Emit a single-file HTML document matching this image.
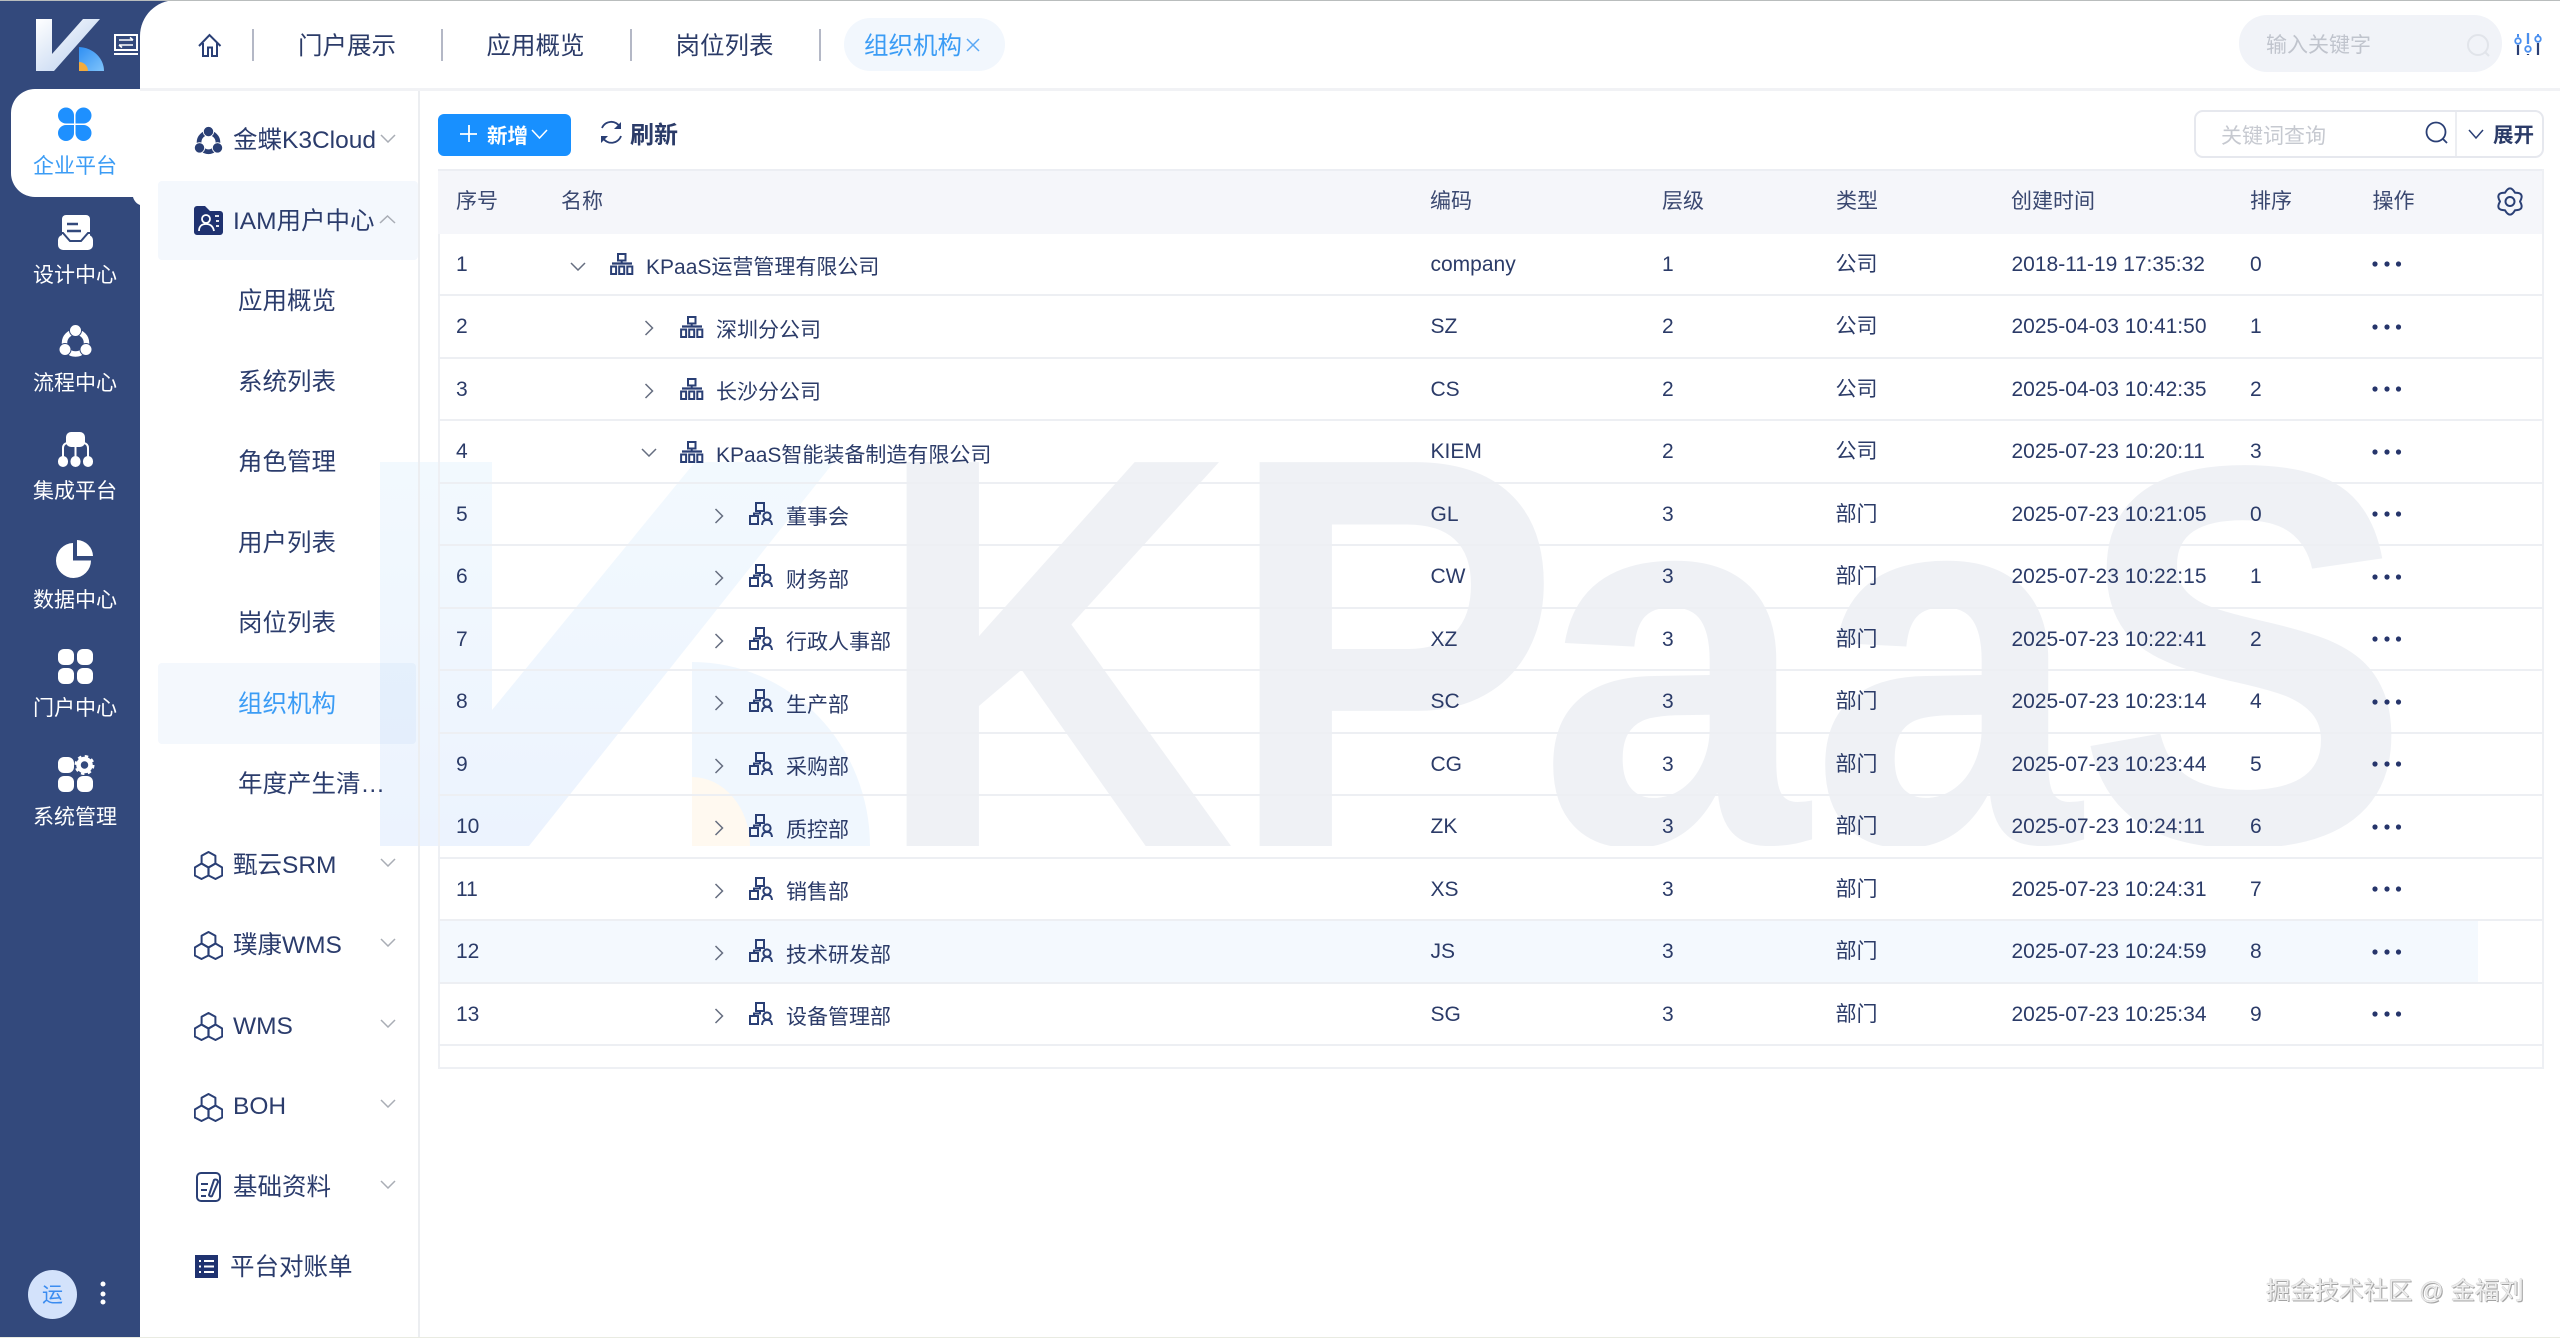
<!DOCTYPE html>
<html lang="zh"><head><meta charset="utf-8"><title>组织机构</title>
<style>
*{box-sizing:border-box;margin:0;padding:0}
html,body{width:2560px;height:1338px;overflow:hidden;background:#fff}
body{position:relative;font-family:"Liberation Sans","Noto Sans CJK SC",sans-serif;color:#2b3b68}
.a{position:absolute}
.t{position:absolute;white-space:nowrap;line-height:40px;height:40px;margin-top:1.5px}
.s{left:0;width:150px;text-align:center;font-size:21px;color:#fff}
.m{font-size:24.5px;color:#2b3c6c}
.h{font-size:24.5px;color:#2b3b68}
.th{font-size:21px;color:#3a4870;top:180px}
.r{position:absolute;left:438px;width:2105px;height:62.5px;border-bottom:2px solid #edeff3;font-size:21px;line-height:61px;color:#2b3b68}
.r span{position:absolute;top:0;white-space:nowrap}
.r .n{top:3.5px}
.c1{left:18px}.c3{left:992.5px}.c4{left:1224px}.c5{left:1397.5px}.c6{left:1573.5px}.c7{left:1812px}
.l0{left:208px}.l1{left:278px}.l2{left:348px}
</style></head><body>

<div class="a" style="left:0;top:0;width:140px;height:1338px;background:#33497c"></div>
<div class="a" style="left:100px;top:0;width:80px;height:60px;background:#33497c"></div>
<div class="a" style="left:140px;top:0;width:60px;height:60px;background:#fff;border-top-left-radius:36px"></div>
<div class="a" style="left:11px;top:89px;width:129px;height:108px;background:#fff;border-radius:24px 0 0 24px"></div>
<svg class="a" style="left:133px;top:197px" width="7" height="8"><path d="M0 0H7V8C4 7 1 4 0 0Z" fill="#fff"/></svg>

<div class="a" style="left:158px;top:181px;width:260px;height:79px;background:#f4f8fd;border-radius:4px"></div>
<div class="a" style="left:158px;top:663px;width:258px;height:81px;background:#f4f8fd;border-radius:4px"></div>

<div class="a" style="left:438px;top:169px;width:2105px;height:65px;background:#f5f6fa;border-top:2px solid #eceef3"></div>
<div class="a" style="left:438px;top:921px;width:2040px;height:62.5px;background:#f4f9fe"></div>

<!-- watermark -->
<svg class="a" style="left:0;top:0" width="2560" height="1338" viewBox="0 0 2560 1338">
<defs><linearGradient id="wm" x1="0" y1="0" x2="0" y2="1"><stop offset="0" stop-color="#2e9cf0" stop-opacity=".06"/><stop offset="1" stop-color="#2a78ee" stop-opacity=".09"/></linearGradient>
<clipPath id="wc"><rect x="370" y="455" width="2050" height="391"/></clipPath></defs>
<path d="M380 462H492V710L695 462H834L529 846H380Z" fill="url(#wm)"/>
<path d="M692 662A178 184 0 0 1 870 846H692Z" fill="#3c96f5" fill-opacity=".08"/>
<path d="M692 777A58 69 0 0 1 750 846H692Z" fill="#fff9f0"/>
<g font-family="Liberation Sans" font-weight="700" font-size="558" fill="#1e3a6e" fill-opacity=".07" clip-path="url(#wc)">
<text transform="translate(873 846) scale(.9 1)">K</text>
<text transform="translate(1226 846) scale(.9 1)">P</text>
<text transform="translate(1539 843) scale(.87 .94)">a</text>
<text transform="translate(1811 843) scale(.87 .94)">a</text>
<text transform="translate(2076 843) scale(.9 .97)">S</text>
</g></svg>

<!-- structure lines -->
<div class="a" style="left:140px;top:88px;width:2420px;height:3px;background:#f1f2f5"></div>
<div class="a" style="left:418px;top:91px;width:2px;height:1247px;background:#eceef1"></div>
<div class="a" style="left:438px;top:234px;width:2px;height:834px;background:#eef0f4"></div>
<div class="a" style="left:2542px;top:169px;width:2px;height:899px;background:#eef0f4"></div>
<div class="a" style="left:438px;top:1067px;width:2106px;height:2px;background:#eef0f4"></div>
<div class="a" style="left:0;top:0;width:2560px;height:1px;background:#b9bdbd"></div>
<div class="a" style="left:0;top:1337px;width:2560px;height:1px;background:#e9ebe2"></div>

<!-- top tabs -->
<div class="a" style="left:844px;top:18px;width:161px;height:53px;background:#f2f7fd;border-radius:27px"></div>
<div class="a" style="left:252px;top:29px;width:2px;height:32px;background:#b4b8c6"></div>
<div class="a" style="left:441px;top:29px;width:2px;height:32px;background:#b4b8c6"></div>
<div class="a" style="left:630px;top:29px;width:2px;height:32px;background:#b4b8c6"></div>
<div class="a" style="left:819px;top:29px;width:2px;height:32px;background:#b4b8c6"></div>
<div class="t h" style="left:298px;top:25px">门户展示</div>
<div class="t h" style="left:486.5px;top:25px">应用概览</div>
<div class="t h" style="left:675.5px;top:25px">岗位列表</div>
<div class="t h" style="left:864px;top:25px;color:#3b9cf5">组织机构</div>

<!-- top search -->
<div class="a" style="left:2239px;top:15px;width:263px;height:57px;background:#f1f3f8;border-radius:28px"></div>
<div class="t" style="left:2266px;top:24px;font-size:21px;color:#c0c4cd">输入关键字</div>

<!-- sidebar text -->
<div class="t s" style="top:145px;color:#3b9cf5">企业平台</div>
<div class="t s" style="top:254px">设计中心</div>
<div class="t s" style="top:362px">流程中心</div>
<div class="t s" style="top:470px">集成平台</div>
<div class="t s" style="top:579px">数据中心</div>
<div class="t s" style="top:687px">门户中心</div>
<div class="t s" style="top:796px">系统管理</div>
<div class="a" style="left:28px;top:1270px;width:49px;height:49px;border-radius:50%;background:#d3e2fb;color:#3b8cf0;font-size:21px;line-height:51px;text-align:center">运</div>

<!-- menu text -->
<div class="t m" style="left:233px;top:119px">金蝶K3Cloud</div>
<div class="t m" style="left:233px;top:200.5px">IAM用户中心</div>
<div class="t m" style="left:238px;top:280px">应用概览</div>
<div class="t m" style="left:238px;top:361px">系统列表</div>
<div class="t m" style="left:238px;top:441.5px">角色管理</div>
<div class="t m" style="left:238px;top:522px">用户列表</div>
<div class="t m" style="left:238px;top:602px">岗位列表</div>
<div class="t m" style="left:238px;top:683px;color:#3b9cf5">组织机构</div>
<div class="t m" style="left:238px;top:763px">年度产生清…</div>
<div class="t m" style="left:233px;top:844px">甄云SRM</div>
<div class="t m" style="left:233px;top:924px">璞康WMS</div>
<div class="t m" style="left:233px;top:1005px">WMS</div>
<div class="t m" style="left:233px;top:1085px">BOH</div>
<div class="t m" style="left:233px;top:1166px">基础资料</div>
<div class="t m" style="left:230px;top:1246px">平台对账单</div>

<!-- toolbar -->
<div class="a" style="left:438px;top:114px;width:133px;height:42px;background:#1890ff;border-radius:6px"></div>
<div class="t" style="left:487px;top:115px;font-size:20.5px;font-weight:700;color:#fff">新增</div>
<div class="t" style="left:630px;top:114px;font-size:24px;font-weight:700;color:#2b3b68">刷新</div>
<div class="a" style="left:2194px;top:110px;width:350px;height:48px;border:2px solid #e6e8ee;border-radius:9px"></div>
<div class="a" style="left:2455px;top:112px;width:2px;height:44px;background:#eceef2"></div>
<div class="t" style="left:2221px;top:115px;font-size:21px;color:#c6c9d0">关键词查询</div>
<div class="t" style="left:2493px;top:114px;font-size:20.5px;font-weight:700;color:#2b3b68">展开</div>

<!-- table header -->
<div class="t th" style="left:456px">序号</div>
<div class="t th" style="left:561px">名称</div>
<div class="t th" style="left:1430px">编码</div>
<div class="t th" style="left:1662px">层级</div>
<div class="t th" style="left:1836px">类型</div>
<div class="t th" style="left:2011px">创建时间</div>
<div class="t th" style="left:2250px">排序</div>
<div class="t th" style="left:2372.5px">操作</div>

<!-- rows -->
<div class="r" style="top:233.5px"><span class="c1">1</span><span class="n l0">KPaaS运营管理有限公司</span><span class="c3">company</span><span class="c4">1</span><span class="c5">公司</span><span class="c6">2018-11-19 17:35:32</span><span class="c7">0</span></div>
<div class="r" style="top:296px"><span class="c1">2</span><span class="n l1">深圳分公司</span><span class="c3">SZ</span><span class="c4">2</span><span class="c5">公司</span><span class="c6">2025-04-03 10:41:50</span><span class="c7">1</span></div>
<div class="r" style="top:358.5px"><span class="c1">3</span><span class="n l1">长沙分公司</span><span class="c3">CS</span><span class="c4">2</span><span class="c5">公司</span><span class="c6">2025-04-03 10:42:35</span><span class="c7">2</span></div>
<div class="r" style="top:421px"><span class="c1">4</span><span class="n l1">KPaaS智能装备制造有限公司</span><span class="c3">KIEM</span><span class="c4">2</span><span class="c5">公司</span><span class="c6">2025-07-23 10:20:11</span><span class="c7">3</span></div>
<div class="r" style="top:483.5px"><span class="c1">5</span><span class="n l2">董事会</span><span class="c3">GL</span><span class="c4">3</span><span class="c5">部门</span><span class="c6">2025-07-23 10:21:05</span><span class="c7">0</span></div>
<div class="r" style="top:546px"><span class="c1">6</span><span class="n l2">财务部</span><span class="c3">CW</span><span class="c4">3</span><span class="c5">部门</span><span class="c6">2025-07-23 10:22:15</span><span class="c7">1</span></div>
<div class="r" style="top:608.5px"><span class="c1">7</span><span class="n l2">行政人事部</span><span class="c3">XZ</span><span class="c4">3</span><span class="c5">部门</span><span class="c6">2025-07-23 10:22:41</span><span class="c7">2</span></div>
<div class="r" style="top:671px"><span class="c1">8</span><span class="n l2">生产部</span><span class="c3">SC</span><span class="c4">3</span><span class="c5">部门</span><span class="c6">2025-07-23 10:23:14</span><span class="c7">4</span></div>
<div class="r" style="top:733.5px"><span class="c1">9</span><span class="n l2">采购部</span><span class="c3">CG</span><span class="c4">3</span><span class="c5">部门</span><span class="c6">2025-07-23 10:23:44</span><span class="c7">5</span></div>
<div class="r" style="top:796px"><span class="c1">10</span><span class="n l2">质控部</span><span class="c3">ZK</span><span class="c4">3</span><span class="c5">部门</span><span class="c6">2025-07-23 10:24:11</span><span class="c7">6</span></div>
<div class="r" style="top:858.5px"><span class="c1">11</span><span class="n l2">销售部</span><span class="c3">XS</span><span class="c4">3</span><span class="c5">部门</span><span class="c6">2025-07-23 10:24:31</span><span class="c7">7</span></div>
<div class="r" style="top:921px"><span class="c1">12</span><span class="n l2">技术研发部</span><span class="c3">JS</span><span class="c4">3</span><span class="c5">部门</span><span class="c6">2025-07-23 10:24:59</span><span class="c7">8</span></div>
<div class="r" style="top:983.5px"><span class="c1">13</span><span class="n l2">设备管理部</span><span class="c3">SG</span><span class="c4">3</span><span class="c5">部门</span><span class="c6">2025-07-23 10:25:34</span><span class="c7">9</span></div>

<div class="t" style="left:2266px;top:1270px;font-size:24.4px;color:#ececec;text-shadow:0 0 .6px #666,1px 1px 0 #aaa">掘金技术社区 @ 金福刘</div>

<!-- icons -->
<svg class="a" style="left:0;top:0" width="2560" height="1338" viewBox="0 0 2560 1338">
<defs>
<linearGradient id="lk" x1="0" y1="0" x2="1" y2="1"><stop offset="0" stop-color="#fff"/><stop offset="1" stop-color="#b6cdee"/></linearGradient>
<linearGradient id="lq" x1="0" y1="0" x2="1" y2="1"><stop offset="0" stop-color="#2f8ff3"/><stop offset="1" stop-color="#80c4fb"/></linearGradient>
<symbol id="hex" width="29" height="29" viewBox="0 0 29 29"><g fill="none" stroke="#2a3f75" stroke-width="2" stroke-linejoin="round"><path d="M14.5 1L21.4 4.8V12.5L14.5 16.5L7.6 12.5V4.8Z"/><path d="M7.5 12.5L14.4 16.5V24.5L7.5 28L.8 24.5V16.5Z"/><path d="M21.5 12.5L28.2 16.5V24.5L21.5 28L14.6 24.5V16.5Z"/></g></symbol>
<symbol id="flow" viewBox="0 0 33 35"><circle cx="16.500" cy="19" r="11" fill="none" stroke="currentColor" stroke-width="5.500"/><g fill="currentColor" stroke="var(--g)" stroke-width="1"><circle cx="16.500" cy="6.500" r="6"/><circle cx="6" cy="25.500" r="6"/><circle cx="27" cy="25.500" r="6"/></g></symbol>
<symbol id="org" width="24" height="22" viewBox="0 0 24 22"><g fill="none" stroke="#2a3f75" stroke-width="2"><rect x="8" y="1" width="7.500" height="6.500"/><path d="M2 10.500H22" stroke-width="2.200"/><path d="M11.700 7.500V10"/><rect x="1.100" y="13.500" width="5" height="7.500"/><rect x="9.200" y="13.500" width="5" height="7.500"/><rect x="17.300" y="13.500" width="5" height="7.500"/></g></symbol>
<symbol id="dept" width="24" height="23" viewBox="0 0 24 23"><g fill="none" stroke="#2a3f75" stroke-width="2"><rect x="7" y="1" width="8" height="8"/><path d="M11 9V11.500H5V14"/><rect x="1" y="14" width="8" height="8"/><circle cx="18" cy="14" r="3.600"/><path d="M13 23C13.500 19 15 18 18 18S22.500 19 23 23"/></g></symbol>
<symbol id="cd" width="16" height="9" viewBox="0 0 16 9"><path d="M1 1L8 8L15 1" fill="none" stroke="currentColor" stroke-width="1.500"/></symbol>
<symbol id="cr" width="10" height="16" viewBox="0 0 10 16"><path d="M1.500 1L8.500 8L1.500 15" fill="none" stroke="#666e80" stroke-width="1.500"/></symbol>
<symbol id="dots" width="30" height="6" viewBox="0 0 30 6"><g fill="#26356b"><circle cx="3" cy="3" r="2.600"/><circle cx="15" cy="3" r="2.600"/><circle cx="26.500" cy="3" r="2.600"/></g></symbol>
</defs>

<!-- logo -->
<path d="M36 19H52V54L83 19H100L54 71H36Z" fill="url(#lk)"/>
<path d="M79 47A26 24 0 0 1 104 71H79Z" fill="url(#lq)"/>
<path d="M79 62A9 9 0 0 1 88 71H79Z" fill="#f3ab3c"/>
<g fill="none" stroke="#fff" stroke-width="2"><rect x="115" y="35" width="22" height="15"/><path d="M114 54H138"/><path d="M119 40H133M130 37.500L133 40M133 45H119M122 47.500L119 45" stroke-width="1.600"/></g>

<!-- sidebar icons -->
<g fill="#1e90ff"><path d="M74 123.500H66A8 8 0 1 1 74 115.500Z"/><path d="M75.500 123.500H83.500A8 8 0 1 0 75.500 115.500Z"/><path d="M74 125V133A8 8 0 1 1 66 125Z"/><path d="M75.500 125V133A8 8 0 1 0 83.500 125Z"/></g>
<g fill="#fff"><rect x="62" y="215" width="28" height="26" rx="4"/><rect x="58" y="235" width="35" height="15" rx="5"/></g>
<path d="M56 233H63L70 241H81L88 233H95" fill="none" stroke="#33497c" stroke-width="2"/>
<path d="M67 224H78M67 231H81" stroke="#33497c" stroke-width="2.500"/>
<g style="color:#fff;--g:#33497c"><use href="#flow" x="59" y="324" width="33" height="35"/></g>
<g fill="#fff"><rect x="66" y="432" width="19" height="15" rx="5"/><rect x="58" y="456" width="10" height="11" rx="5"/><rect x="70.500" y="456" width="10" height="11" rx="5"/><rect x="83" y="456" width="10" height="11" rx="5"/></g>
<path d="M63 457V448Q63 444 67 443M88 457V448Q88 444 84 443M75.500 447V457" fill="none" stroke="#fff" stroke-width="2"/>
<path d="M73 543V560.500H91A17.500 17.500 0 1 1 73 543Z" fill="#fff"/><path d="M77 540A16.500 16.500 0 0 1 93 556H77Z" fill="#fff"/>
<g fill="#fff"><rect x="58" y="649" width="16" height="16" rx="6"/><rect x="77" y="649" width="16" height="16" rx="6"/><rect x="58" y="668" width="16" height="16" rx="6"/><rect x="77" y="668" width="16" height="16" rx="6"/>
<rect x="58" y="757" width="16" height="16" rx="6"/><rect x="58" y="776" width="16" height="16" rx="6"/><rect x="77" y="776" width="16" height="16" rx="6"/></g>
<circle cx="84.500" cy="765" r="6" fill="none" stroke="#fff" stroke-width="4.500"/><circle cx="84.500" cy="765" r="9" fill="none" stroke="#fff" stroke-width="2" stroke-dasharray="3.500 3.570"/>
<g fill="#fff"><circle cx="103" cy="1284" r="2.500"/><circle cx="103" cy="1294" r="2.500"/><circle cx="103" cy="1302" r="2.500"/></g>

<!-- top icons -->
<path d="M199 46L209.500 35L220.500 46M203 43V56H208V47.500H212V56H217V43" fill="none" stroke="#2a3f75" stroke-width="2"/>
<path d="M967 39L979 51M979 39L967 51" stroke="#5aa8f5" stroke-width="1.500"/>
<g fill="none" stroke="#e1e4ea" stroke-width="2"><circle cx="2478" cy="45" r="10"/><path d="M2485 52L2489 56"/></g>
<g fill="none"><path d="M2518 45V55M2528 33V44M2528 54V55M2538 43V55" stroke="#2a3f75" stroke-width="2.200"/><path d="M2518 34V37M2528 33V44M2538 34V36" stroke="#4a8fef" stroke-width="2"/><circle cx="2518" cy="41" r="2.800" stroke="#4a8fef" stroke-width="1.800"/><circle cx="2528" cy="49" r="2.800" stroke="#4a8fef" stroke-width="1.800"/><circle cx="2538" cy="39" r="2.800" stroke="#4a8fef" stroke-width="1.800"/></g>

<!-- toolbar icons -->
<path d="M469 125V142M460 134H477" stroke="#fff" stroke-width="1.800"/>
<path d="M532 130L539.500 138L547 130" fill="none" stroke="#fff" stroke-width="1.500"/>
<g fill="none" stroke="#2a3f75" stroke-width="1.800"><path d="M602 128A10 10 0 0 1 620 127"/><path d="M621 136A10 10 0 0 1 603 138"/></g>
<path d="M621 122V129H614ZM601 143V136H608Z" fill="#2a3f75"/>
<g fill="none" stroke="#2a3f75" stroke-width="1.800"><circle cx="2436" cy="132" r="9.500"/><path d="M2443 139L2447 143"/></g>
<path d="M2469 130L2476 138L2483 130" fill="none" stroke="#2a3f75" stroke-width="1.500"/>
<g fill="none" stroke="#2a3f75" stroke-width="2"><path d="M2505 192.800Q2510 184 2515 192.800Q2525 192.500 2520 201.500Q2525 210.500 2515 210.200Q2510 219 2505 210.200Q2495 210.500 2500 201.500Q2495 192.500 2505 192.800Z" stroke-linejoin="round"/><circle cx="2510" cy="201.500" r="4.500"/></g>

<!-- menu icons -->
<g style="color:#2a3f75;--g:#fff"><use href="#flow" x="194" y="126" width="29" height="30"/></g>
<path d="M194 209a3 3 0 0 1 3-3h8l5 5h10a3 3 0 0 1 3 3v18a3 3 0 0 1-3 3h-23a3 3 0 0 1-3-3z" fill="#1f3270"/>
<g fill="none" stroke="#fff" stroke-width="1.800"><circle cx="206" cy="219" r="4"/><path d="M199 231C199 226 202 224 206 224S213 226 214 231M215 216H219M216 221H219M216 226H219"/></g>
<use href="#hex" x="194" y="851"/><use href="#hex" x="194" y="931"/><use href="#hex" x="194" y="1012"/><use href="#hex" x="194" y="1093"/>
<g fill="none" stroke="#2a3f75" stroke-width="2"><rect x="197" y="1173" width="23" height="28" rx="4"/><path d="M201 1184H208M201 1190H207M201 1196H206"/><path d="M209 1195L214 1180A2.500 2.500 0 0 1 218 1182L212 1196A2 2 0 0 1 209 1195Z"/></g>
<rect x="195" y="1255" width="23" height="23" fill="#1f3270"/><path d="M199 1261H201M204 1261H214M199 1266.500H201M204 1266.500H214M199 1272H201M204 1272H214" stroke="#fff" stroke-width="2"/>

<g style="color:#a9adb5">
<use href="#cd" x="380" y="134"/>
<path d="M380 223L387.500 216L395 223" fill="none" stroke="#a9adb5" stroke-width="1.500"/>
<use href="#cd" x="380" y="858"/><use href="#cd" x="380" y="938"/><use href="#cd" x="380" y="1019"/><use href="#cd" x="380" y="1099"/><use href="#cd" x="380" y="1180"/>
</g>

<!-- tree icons -->
<g style="color:#666e80"><use href="#cd" x="570" y="262"/><use href="#cd" x="641" y="448"/></g>
<use href="#org" x="610" y="253"/><use href="#org" x="680" y="316"/><use href="#org" x="680" y="378"/><use href="#org" x="680" y="441"/>
<use href="#cr" x="644" y="320"/><use href="#cr" x="644" y="383"/>
<use href="#cr" x="714" y="508"/><use href="#cr" x="714" y="570"/><use href="#cr" x="714" y="633"/><use href="#cr" x="714" y="695"/><use href="#cr" x="714" y="758"/><use href="#cr" x="714" y="820"/><use href="#cr" x="714" y="883"/><use href="#cr" x="714" y="945"/><use href="#cr" x="714" y="1008"/>
<use href="#dept" x="749" y="502"/><use href="#dept" x="749" y="564"/><use href="#dept" x="749" y="627"/><use href="#dept" x="749" y="689"/><use href="#dept" x="749" y="752"/><use href="#dept" x="749" y="814"/><use href="#dept" x="749" y="877"/><use href="#dept" x="749" y="939"/><use href="#dept" x="749" y="1002"/>

<use href="#dots" x="2372" y="261"/><use href="#dots" x="2372" y="324"/><use href="#dots" x="2372" y="386"/><use href="#dots" x="2372" y="449"/><use href="#dots" x="2372" y="511"/><use href="#dots" x="2372" y="574"/><use href="#dots" x="2372" y="636"/><use href="#dots" x="2372" y="699"/><use href="#dots" x="2372" y="761"/><use href="#dots" x="2372" y="824"/><use href="#dots" x="2372" y="886"/><use href="#dots" x="2372" y="949"/><use href="#dots" x="2372" y="1011"/>
</svg>
</body></html>
